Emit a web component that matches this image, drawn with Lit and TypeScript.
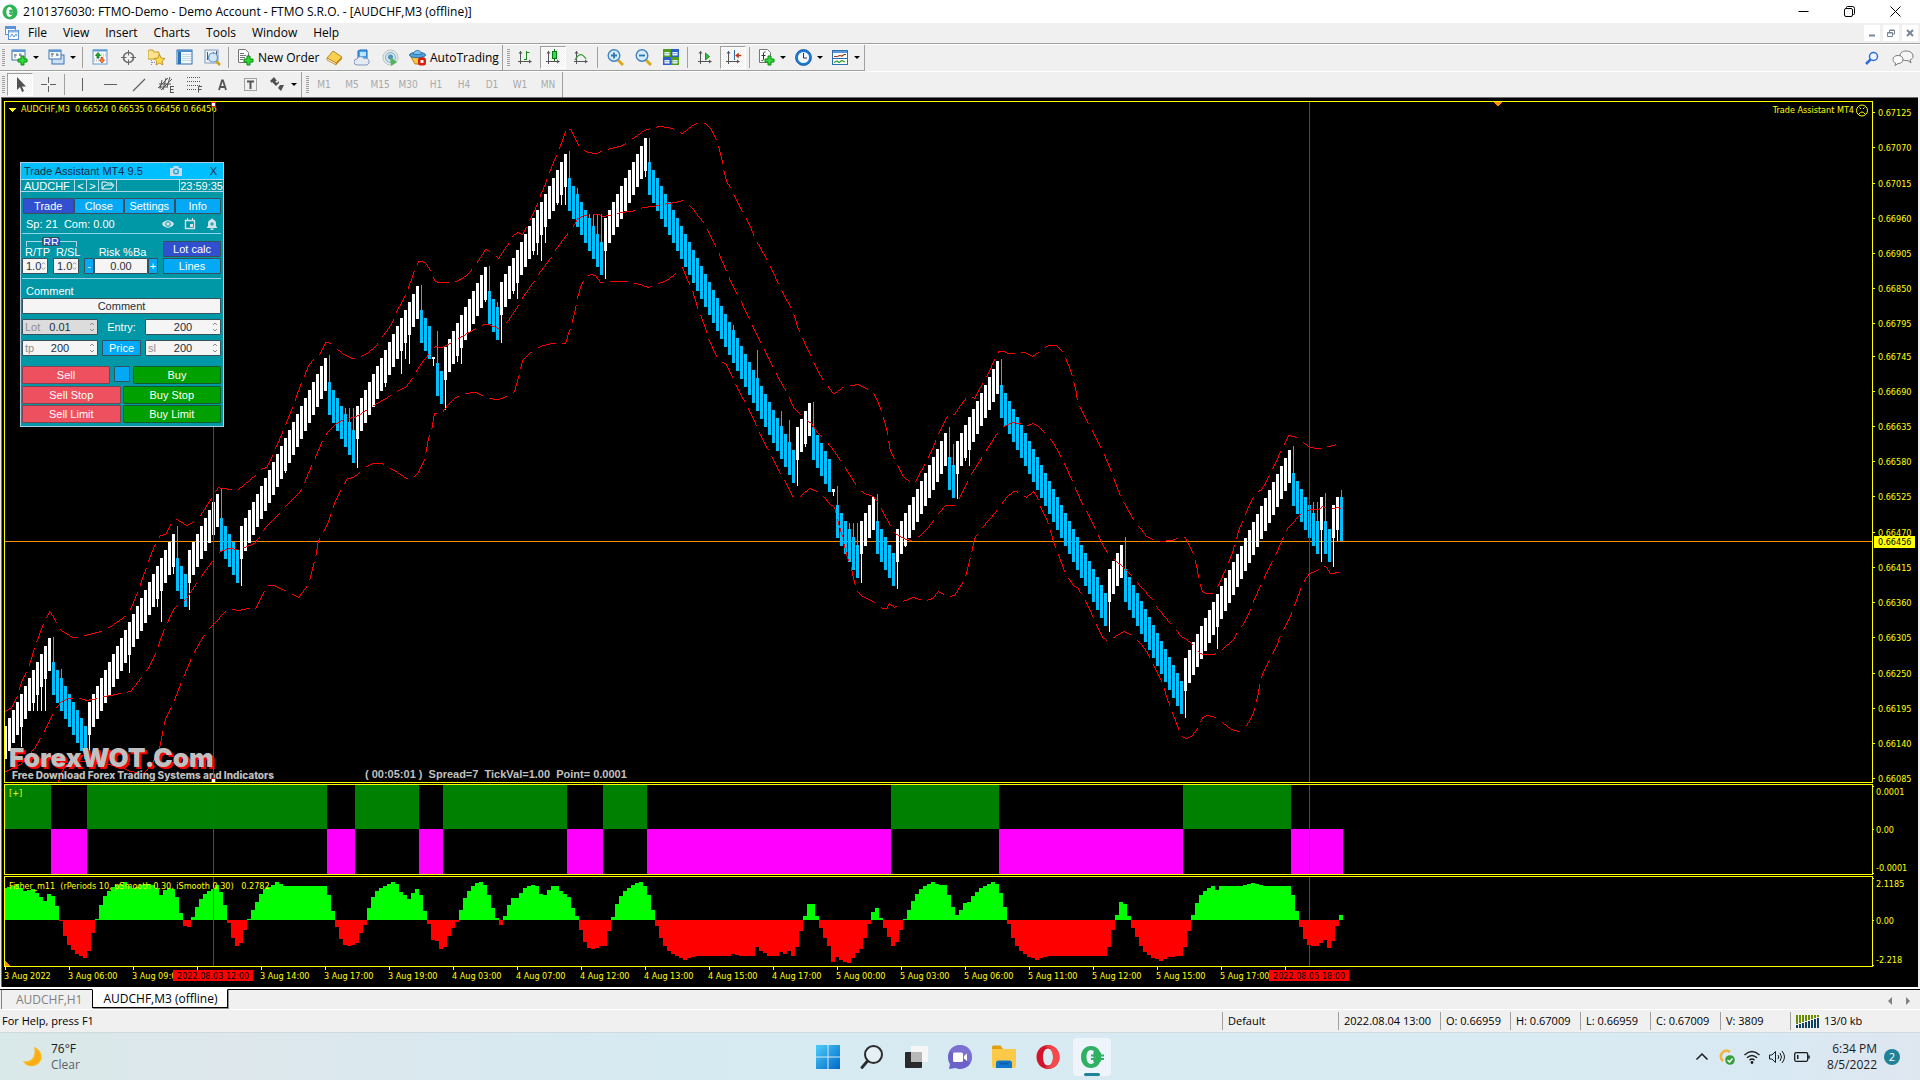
import { LitElement, html, svg, css, nothing } from "lit";
import { customElement, state } from "lit/decorators.js";
import { classMap } from "lit/directives/class-map.js";

/* ------------------------------------------------------------------ */
/* Chart data                                                          */
/* ------------------------------------------------------------------ */

type Run = {
  x: number;
  n: number;
  top: number;
  up: boolean;
  wicks?: [number, number][];
  h?: number;
};

/* Each run is a series of bricks 4px apart, stepping 8px per brick. */
const RUNS: Run[] = [
  { x: 4, n: 12, top: 726, up: true, wicks: [[20, 747], [32, 711], [36, 711], [40, 711], [44, 711]] },
  { x: 52, n: 9, top: 662, up: false, wicks: [[52, 637], [60, 669]] },
  { x: 88, n: 22, top: 702, up: true, wicks: [[88, 753], [128, 673], [156, 607], [160, 622], [172, 574]] },
  { x: 176, n: 3, top: 558, up: false, wicks: [[176, 526]] },
  { x: 188, n: 8, top: 550, up: true, wicks: [[188, 610]] },
  { x: 220, n: 5, top: 518, up: false, wicks: [[220, 489]] },
  { x: 240, n: 22, top: 526, up: true, wicks: [[240, 586], [284, 473]] },
  { x: 328, n: 7, top: 382, up: false, wicks: [[328, 355], [344, 408], [348, 408], [352, 408]] },
  { x: 356, n: 16, top: 406, up: true, wicks: [[356, 468], [384, 387], [400, 374], [404, 359], [408, 364]] },
  { x: 420, n: 3, top: 310, up: false, wicks: [[420, 285]] },
  { x: 432, n: 1, top: 357, up: true, h: 2, wicks: [[432, 366]] },
  { x: 436, n: 2, top: 363, up: false, wicks: [[436, 331]] },
  { x: 444, n: 11, top: 347, up: true, wicks: [[444, 410], [456, 362], [460, 364], [484, 302]] },
  { x: 488, n: 3, top: 291, up: false, wicks: [[488, 266], [496, 302]] },
  { x: 500, n: 17, top: 282, up: true, wicks: [[500, 343], [512, 294], [516, 299], [532, 255], [536, 255], [540, 261], [544, 243], [556, 205], [560, 205], [564, 205]] },
  { x: 568, n: 9, top: 178, up: false, wicks: [[568, 151], [576, 188], [588, 214], [592, 214], [596, 214], [600, 214]] },
  { x: 604, n: 11, top: 218, up: true, wicks: [[604, 279], [644, 177]] },
  { x: 648, n: 37, top: 162, up: false, wicks: [[648, 138], [732, 325], [756, 350], [780, 411], [788, 420]] },
  { x: 796, n: 4, top: 427, up: true, wicks: [[796, 486], [804, 447]] },
  { x: 812, n: 5, top: 427, up: false, wicks: [[812, 402]] },
  { x: 832, n: 1, top: 489, up: true, h: 3, wicks: [[832, 496]] },
  { x: 836, n: 6, top: 505, up: false, wicks: [[836, 486], [848, 523], [852, 523], [856, 523]] },
  { x: 860, n: 4, top: 521, up: true, wicks: [[860, 583]] },
  { x: 876, n: 5, top: 521, up: false, wicks: [[876, 494]] },
  { x: 896, n: 13, top: 529, up: true, wicks: [[896, 589], [904, 547]] },
  { x: 948, n: 2, top: 457, up: false, wicks: [[948, 427], [952, 444]] },
  { x: 956, n: 11, top: 441, up: true, wicks: [[956, 499], [964, 461], [968, 466]] },
  { x: 1000, n: 27, top: 385, up: false, wicks: [[1000, 359]] },
  { x: 1108, n: 4, top: 569, up: true, wicks: [[1108, 632]] },
  { x: 1124, n: 15, top: 569, up: false, wicks: [[1124, 537]] },
  { x: 1184, n: 27, top: 658, up: true, wicks: [[1184, 718], [1216, 649]] },
  { x: 1292, n: 7, top: 473, up: false, wicks: [[1292, 446], [1312, 502], [1316, 502]] },
  { x: 1320, n: 1, top: 497, up: true, wicks: [[1320, 562]] },
  { x: 1324, n: 2, top: 521, up: false, wicks: [[1324, 493]] },
  { x: 1332, n: 2, top: 505, up: true, wicks: [[1332, 567], [1336, 541]] },
  { x: 1340, n: 1, top: 497, up: false, h: 44, wicks: [[1340, 490]] },
];

const UPPER = [5,711,11,707,17,695,21,682,28,667,35,645,43,623,49,611,53,616,56,623,61,630,72,637,79,637,88,634,100,631,109,627,126,615,131,607,137,592,146,567,149,558,155,543,160,535,165,534,171,523,175,518,186,525,192,522,200,515,211,498,218,487,222,488,231,489,238,489,255,475,260,469,266,467,272,455,275,448,282,432,292,407,300,385,304,376,308,365,313,359,318,356,325,342,328,342,335,347,342,353,352,358,359,357,368,352,376,345,381,338,392,322,395,313,404,297,407,290,413,273,418,261,422,261,425,263,428,267,431,273,434,280,437,282,443,282,453,282,462,278,468,273,474,266,480,257,485,249,492,252,498,258,504,249,509,242,513,235,517,232,522,234,527,224,535,208,538,200,545,183,547,177,553,162,557,153,563,137,566,127,570,129,576,141,579,147,587,152,596,153,603,150,610,148,619,146,627,142,644,130,650,128,659,126,668,127,674,129,682,133,692,125,698,122,705,123,710,128,713,133,717,142,721,157,723,168,726,181,731,189,739,206,743,213,751,229,754,237,763,253,767,261,775,277,778,284,787,301,791,309,794,316,797,326,800,333,807,349,811,357,817,370,823,380,833,393,837,391,844,386,858,384,862,386,868,389,873,392,878,403,881,411,886,428,890,451,894,458,901,473,903,476,909,481,914,483,921,470,925,462,933,446,936,438,943,423,947,415,954,414,960,405,966,397,969,395,974,398,978,390,983,382,991,366,998,351,1003,351,1008,353,1014,353,1025,352,1032,356,1038,352,1048,345,1056,345,1062,351,1069,367,1072,376,1076,393,1077,402,1084,416,1088,423,1097,441,1101,448,1108,464,1111,472,1117,488,1120,496,1129,512,1133,519,1140,528,1146,536,1153,539,1160,541,1171,540,1177,538,1182,536,1185,537,1189,546,1193,553,1197,570,1198,578,1202,591,1205,593,1212,593,1217,586,1222,576,1225,569,1232,552,1234,544,1239,528,1242,521,1249,504,1253,497,1257,491,1261,489,1265,483,1268,476,1277,459,1279,453,1288,435,1294,436,1302,441,1309,447,1318,448,1323,448,1328,446,1336,444];

const MIDDLE = [5,771,10,769,21,763,34,748,40,738,44,731,50,718,56,707,61,701,67,698,80,698,86,700,97,698,104,696,120,693,130,691,141,677,147,669,155,653,158,645,164,628,168,620,173,609,178,604,186,598,196,583,203,573,214,558,220,551,229,548,238,549,244,547,254,543,260,535,265,527,280,512,287,504,298,493,302,488,305,480,312,463,315,457,322,440,327,432,335,424,343,419,353,417,358,415,367,409,375,404,392,394,398,390,406,386,413,376,417,369,423,360,430,352,435,346,441,347,453,341,460,337,477,327,484,324,488,324,498,328,501,327,508,320,514,311,519,303,523,296,535,279,540,271,552,255,556,248,568,232,574,224,577,218,583,215,590,214,598,214,603,216,613,214,620,212,636,210,643,207,660,205,667,203,675,202,682,200,685,201,692,208,699,217,705,225,708,232,717,249,720,257,727,273,730,281,739,298,742,304,750,321,753,328,762,345,765,352,774,370,777,376,787,393,790,400,793,407,803,417,811,423,817,432,825,440,830,446,834,451,842,463,847,471,858,488,864,493,873,496,878,503,882,511,891,527,895,533,905,539,913,540,920,535,927,528,934,519,938,513,945,505,954,505,960,496,968,479,972,472,982,456,987,448,996,434,1003,426,1012,422,1020,423,1027,425,1033,423,1037,425,1045,433,1051,440,1056,448,1061,457,1064,463,1072,481,1075,488,1082,504,1087,512,1095,529,1098,536,1103,546,1107,552,1115,560,1123,567,1130,574,1140,586,1151,598,1155,605,1169,622,1175,629,1181,636,1185,638,1192,644,1198,651,1202,654,1213,654,1216,653,1222,649,1233,639,1237,632,1242,625,1251,608,1253,601,1260,585,1264,577,1272,560,1276,553,1283,536,1288,527,1302,512,1310,509,1318,509,1322,506,1327,508,1333,508,1338,507,1341,508];

const LOWER = [58,781,62,770,67,762,82,761,108,764,122,767,130,771,143,773,152,763,159,748,162,733,165,718,170,708,173,702,180,684,183,677,190,660,193,653,203,636,208,629,214,623,224,612,230,608,238,610,248,608,255,609,263,592,267,585,274,585,282,589,289,592,298,597,305,588,309,580,313,564,315,557,318,540,322,533,328,521,331,511,334,503,339,492,343,485,347,478,353,477,358,473,365,467,372,463,382,463,388,467,397,472,406,478,413,477,417,473,423,462,425,454,428,438,431,430,434,413,441,413,448,404,455,397,463,393,475,392,480,394,487,398,498,399,504,397,511,393,514,391,518,377,520,369,522,360,529,353,536,348,543,345,552,343,565,343,568,333,571,325,575,308,577,297,581,284,585,277,590,274,595,275,600,282,607,281,625,281,632,282,640,284,648,287,656,284,666,280,673,275,682,267,688,282,692,290,697,307,700,314,706,331,708,338,715,354,720,361,725,363,732,376,734,382,743,399,747,407,755,423,758,431,767,448,771,455,779,472,783,478,792,496,797,498,803,493,809,488,814,490,821,493,828,502,834,507,837,519,841,533,843,541,847,558,850,564,854,582,857,591,862,596,871,600,877,604,882,608,886,608,889,603,894,607,902,601,913,597,919,599,926,600,932,598,938,591,942,593,948,596,954,595,961,584,965,576,969,560,971,553,974,538,981,528,995,512,1000,505,1006,497,1013,491,1016,491,1022,494,1026,497,1033,491,1037,497,1039,504,1047,521,1049,528,1054,544,1057,552,1063,568,1066,575,1073,585,1077,587,1083,597,1091,613,1094,621,1102,637,1108,641,1115,636,1123,631,1132,635,1140,643,1146,651,1150,659,1158,675,1162,683,1167,699,1170,707,1176,723,1179,731,1182,736,1186,738,1192,735,1197,728,1202,717,1207,715,1213,716,1222,722,1231,729,1238,731,1242,729,1246,725,1251,717,1254,709,1258,692,1259,685,1262,673,1265,668,1268,661,1277,644,1279,637,1288,620,1291,613,1297,597,1300,589,1304,580,1309,573,1317,570,1322,564,1326,567,1330,573,1338,572,1341,573];

/* Trend histogram: [from, to, rising] */
const TREND: [number, number, boolean][] = [
  [5, 51, true], [51, 87, false], [87, 327, true], [327, 355, false], [355, 419, true],
  [419, 443, false], [443, 567, true], [567, 603, false], [603, 647, true], [647, 891, false],
  [891, 999, true], [999, 1183, false], [1183, 1291, true], [1291, 1343, false],
];

const rep = (v: number, n: number): number[] => Array.from({ length: n }, () => v);

/* Fisher histogram heights, one value per 4px bar */
const FISHER: number[] = [
  32, 33, 34, 36, 32, 29, 30, 31, 27, 23, 19, 26, 24, 14, -1, -16, -25, -30, -34, -36, -38, -31, -13, 1, 15, 24, 29, 33, 35, 36, 38, 34, 32,
  33, 35, 36, 36, 35, 32, 25, 30, 32, 31, 23, 7, -6, -7, 3, 13, 21, 26, 29, 31, 35, 28, 15, -3, -18, -26, -23, -10, 1, 10, 18, 26, 31,
  33, 35, 38, 36, ...rep(34, 11), 25, 9, -7, -19, -25, -26, -25, -23, -13, -5, 12, 23, 29, 32, 34, 36, 38, 36, 28, 25, 21, 27, 31, 25, 9,
  -4, -20, -21, -29, -27, -16, -8, -2, 10, 22, 29, 34, 37, 38, 35, 25, 12, 2, -5, 4, 15, 22, 22, 27, 32, 34, 35, 34, 26, 25, 30, 34, 34,
  29, 26, 23, 12, 4, -10, -22, -28, -29, -28, -26, -26, -11, 3, 16, 24, 29, 32, 35, 37, 38, 34, 25, 10, -6, -18, -26, -31, -34, -36, -38,
  -40, -38, -37, ...rep(-36, 9), -34, -35, ...rep(-36, 4), -27, -31, -33, -36, -36, -36, -32, -34, -31, -36, -27, -11, 4, 16, 16, 4, -8,
  -18, -26, -42, -37, -40, -42, -43, -38, -33, -29, -18, -4, 8, 12, 2, -8, -17, -26, -22, -10, 1, 10, 19, 26, 31, 34, 36, 38, 36, 35, 35,
  25, 13, 5, 10, 17, 18, 24, 28, 32, 34, 36, 38, 36, 27, 13, -4, -18, -26, -31, -34, -37, -38, -40, -38, -37, ...rep(-36, 15), -27, -10, 5,
  18, 16, 4, -8, -17, -26, -32, -35, -38, -39, -41, -39, -37, -37, -36, -36, -27, -11, 5, 17, 25, 29, 32, 34, 30, ...rep(34, 6), 35, 36, 37,
  36, 35, ...rep(34, 7), 25, 9, -7, -19, -25, -26, -26, -23, -20, -28, -21, -6, 5,
];

const PRICES: [string, number][] = [
  ["0.67125", 112], ["0.67070", 147], ["0.67015", 183], ["0.66960", 218], ["0.66905", 253], ["0.66850", 288],
  ["0.66795", 323], ["0.66745", 356], ["0.66690", 391], ["0.66635", 426], ["0.66580", 461], ["0.66525", 496],
  ["0.66470", 532], ["0.66415", 567], ["0.66360", 602], ["0.66305", 637], ["0.66250", 673], ["0.66195", 708],
  ["0.66140", 743], ["0.66085", 778],
];

const TIMES = [
  "3 Aug 2022", "3 Aug 06:00", "3 Aug 09:00", "", "3 Aug 14:00", "3 Aug 17:00", "3 Aug 19:00", "4 Aug 03:00",
  "4 Aug 07:00", "4 Aug 12:00", "4 Aug 13:00", "4 Aug 15:00", "4 Aug 17:00", "5 Aug 00:00", "5 Aug 03:00",
  "5 Aug 06:00", "5 Aug 11:00", "5 Aug 12:00", "5 Aug 15:00", "5 Aug 17:00", "",
];

function candlePaths() {
  const out = { up: "", down: "" };
  for (const run of RUNS) {
    const h = run.h ?? 33;
    let d = "";
    for (let i = 0; i < run.n; i++) {
      const y = run.top + (run.up ? -8 : 8) * i;
      d += `M${run.x + i * 4} ${y}h3v${h}h-3z`;
    }
    for (const [wx, wy] of run.wicks ?? []) {
      const y = run.top + ((run.up ? -8 : 8) * (wx - run.x)) / 4;
      d += `M${wx + 1} ${y}h1V${wy}h-1z`;
    }
    out[run.up ? "up" : "down"] += d;
  }
  return out;
}

/* Walks a polyline pixel by pixel and keeps 18 of every 24 steps. */
function dashedPath(pts: number[], phase = 0) {
  let d = "";
  let count = phase;
  for (let i = 0; i + 3 < pts.length; i += 2) {
    const [x0, y0, x1, y1] = pts.slice(i, i + 4);
    const steps = Math.max(Math.abs(x1 - x0), Math.abs(y1 - y0));
    for (let s = 0; s < steps; s++) {
      if (count++ % 24 < 18) {
        const x = Math.round(x0 + ((x1 - x0) * s) / steps);
        const y = Math.round(y0 + ((y1 - y0) * s) / steps);
        d += `M${x} ${y}h1v1h-1z`;
      }
    }
  }
  return d;
}

function fisherPaths() {
  let up = "";
  let down = "";
  FISHER.forEach((v, i) => {
    const x = (i + 1) * 4 - 1;
    if (v > 0) up += `M${x} ${920 - v}h4V920h-4z`;
    else down += `M${x} 920h4v${-v}h-4z`;
  });
  return { up, down };
}

const CANDLES = candlePaths();
const BANDS = dashedPath(UPPER) + dashedPath(MIDDLE) + dashedPath(LOWER);
const FISH = fisherPaths();

/* ------------------------------------------------------------------ */
/* Icons                                                               */
/* ------------------------------------------------------------------ */

const axes = svg`<path d="M3.500 2v13M1 12.500h13.500" stroke="#555" fill="none"/><path d="M1.500 4.500l2-2.500 2 2.500zM12 10.500l2.500 2-2.500 2z" fill="#555"/>`;
const plus = svg`<path d="M10 7h3v3h3v3h-3v3h-3v-3H7v-3h3z" fill="#2fdc35" stroke="#0a8a12"/>`;

const ICONS: Record<string, unknown> = {
  newChart: svg`<rect x="1" y="1" width="13" height="10" fill="#fff" stroke="#3a74b4"/><path d="M1 2h13" stroke="#5a9ad8" stroke-width="2"/><path d="M4 5v4M3 6h3M9 4v3M8 6h3" stroke="#678" fill="none"/>${plus}`,
  profiles: svg`<rect x="4" y="6" width="12" height="9" fill="#cfe2f4" stroke="#3a74b4"/><rect x="1" y="1" width="12" height="9" fill="#f5faff" stroke="#3a74b4"/><path d="M1 2h12" stroke="#5a9ad8" stroke-width="2"/><path d="M4 4v4M3 5h3M9 4v3M8 6h3" stroke="#678" fill="none"/>`,
  market: svg`<rect x="1" y="1" width="14" height="14" fill="#fff" stroke="#5c9ad0"/><path d="M1 1.500h14" stroke="#5c9ad0" stroke-width="2"/><path d="M9 5h5M9 7h5M2 10h5M2 12h5" stroke="#aab" stroke-dasharray="1 1"/><path d="M6 3.500l2.500 3H7V9H5V6.500H3.500z" fill="#18b020" stroke="#0a7a10" stroke-width=".8"/><path d="M10 14l-2.500-3H9V8.500h2V11h1.500z" fill="#ff8a40" stroke="#c03a08" stroke-width=".8"/>`,
  dataWindow: svg`<circle cx="8.500" cy="8.500" r="5" fill="none" stroke="#6a6a6a" stroke-width="1.600"/><path d="M8.500 1v5.500M8.500 10.500V16M1 8.500h5.500M10.500 8.500H16" stroke="#6a6a6a"/>`,
  navigator: svg`<path d="M0 3l1-2h4l1 2h5v7H0z" fill="#fbe391" stroke="#c89b1c"/><path d="M3.500 11v5M4 13.500h4" stroke="#8894a0" stroke-dasharray="1 1"/><path d="M11.500 5.500l1.700 3.500 3.800.5-2.800 2.600.7 3.900-3.400-1.900L8 16l.8-3.900L6 9.500l3.900-.5z" fill="#ffdb4a" stroke="#b5831a" stroke-width=".8"/>`,
  terminal: svg`<rect x="1" y="1" width="15" height="14" fill="#f4faff" stroke="#2d6fb0"/><path d="M1 2h15" stroke="#4a90d2" stroke-width="2"/><path d="M2 3h3v12H2z" fill="#2a70b8"/><path d="M6 5.500h9M6 7.500h9M6 9.500h9M6 11.500h9" stroke="#c4d6e6"/>`,
  tester: svg`<rect x="1" y="1" width="13" height="13" fill="#eef4fb" stroke="#7b9cc0"/><path d="M3.500 3v8M5.500 5v6M9.500 3v3M12.500 2v5" stroke="#556"/><path d="M12 12l4 4" stroke="#d6a01e" stroke-width="2.500"/><circle cx="9" cy="8.500" r="4.500" fill="#cfe6fa" fill-opacity=".9" stroke="#5f93c6" stroke-width="1.200"/>`,
  newOrder: svg`<path d="M1.500.5h7l3 3v10h-10z" fill="#fdfdfd" stroke="#777"/><path d="M3 4.500h4M3 6.500h6M3 8.500h5M3 10.500h3" stroke="#777"/>${plus}`,
  metaEditor: svg`<path d="M1 9l6-7 9 6v2l-6 6-9-5z" fill="#c98a14"/><path d="M1 9l6-7 9 6-6 6z" fill="#f8cf52" stroke="#a97010" stroke-width=".7"/><path d="M1 9l9 5v2l-9-5z" fill="#fff2c0" stroke="#a97010" stroke-width=".6"/>`,
  market2: svg`<path d="M4 2l2-1h7v9H4z" fill="#3fa7f0" stroke="#1d62ae"/><path d="M6 3h6v4H6z" fill="#bfe4ff"/><path d="M3 16a3 3 0 010-6 4 4 0 017-.6A3.300 3.300 0 0113 16z" fill="#e4ebf7" stroke="#8598bb"/>`,
  signals: svg`<circle cx="8.500" cy="8.500" r="7.500" fill="#e6ecea" stroke="#b4c4c0"/><circle cx="8.500" cy="8.500" r="5" fill="#d3e6ec" stroke="#74aad0"/><circle cx="8.500" cy="8" r="2.500" fill="#4f8fc0"/><path d="M8 8l1 9 6-4z" fill="#52b35d"/>`,
  autoTrading: svg`<path d="M2 8h13l-4 7H6z" fill="#f4c845" stroke="#b98712"/><ellipse cx="8.500" cy="6" rx="8" ry="2.700" fill="#4fa6de" stroke="#2a6ca2"/><path d="M4.500 5.500c0-5.500 8-5.500 8 0z" fill="#79c2ee" stroke="#2a6ca2" stroke-width=".8"/><rect x="9" y="8.500" width="8" height="8" rx="2.500" fill="#d8200c"/><rect x="11.500" y="11" width="3" height="3" fill="#fff"/>`,
  barChart: svg`${axes}<path d="M9.500 2v9M7 10.500h2M10 3.500h2.500" stroke="#1c8a20" fill="none"/>`,
  candleChart: svg`${axes}<path d="M9.500 0v12" stroke="#0a7a10"/><rect x="7.500" y="2.500" width="4" height="7" fill="#2fdc55" stroke="#0a7a10"/>`,
  lineChart: svg`${axes}<path d="M2 11c4-7 7-7 11-1" stroke="#3a9a3a" fill="none" stroke-width="1.200"/>`,
  zoomIn: svg`<path d="M11 11l5 5" stroke="#d8a81e" stroke-width="3"/><circle cx="7" cy="6.500" r="5.800" fill="#d6ecfb" stroke="#3f83c0" stroke-width="1.400"/><path d="M7 3.500v6M4 6.500h6" stroke="#2f77b4" stroke-width="1.800"/>`,
  zoomOut: svg`<path d="M11 11l5 5" stroke="#d8a81e" stroke-width="3"/><circle cx="7" cy="6.500" r="5.800" fill="#d6ecfb" stroke="#3f83c0" stroke-width="1.400"/><path d="M4 6.500h6" stroke="#2f77b4" stroke-width="1.800"/>`,
  tile: svg`<path d="M0 0h8v8H0zM8 8h8v8H8z" fill="#4fa018"/><path d="M8 0h8v8H8zM0 8h8v8H0z" fill="#2b5fd0"/><path d="M1.500 3h5v3.500h-5zM9.500 3h5v3.500h-5zM1.500 11h5v3.500h-5zM9.500 11h5v3.500h-5z" fill="#eef4ff"/><path d="M2 4.500h4M10 4.500h4M2 12.500h4M10 12.500h4" stroke="#9bb"/>`,
  autoScroll: svg`${axes}<path d="M8.500 4l4 3.500-4 3.500z" fill="#2fc040" stroke="#0a7a10" stroke-width=".8"/>`,
  chartShift: svg`${axes}<path d="M9.500 1v10" stroke="#2f6fa8"/><path d="M10.500 6.500l3-2.500v2H16v1h-2.500v2z" fill="#c03a10" stroke="#c03a10" stroke-width=".5"/>`,
  indicators: svg`<path d="M1.500.5h8l3 3v10h-11z" fill="#fdfdfd" stroke="#777"/><path d="M7.500 3c-2-.5-2 1-2 3v4c0 1-.5 2-2 1.500M3.500 6.500h4" stroke="#333" fill="none"/>${plus}`,
  clock: svg`<circle cx="8.500" cy="8.500" r="6.800" fill="#f4f9ff" stroke="#1c7ad8" stroke-width="2.400"/><circle cx="8.500" cy="8.500" r="8" fill="none" stroke="#0d4688" stroke-width=".7"/><path d="M8.500 4v5h3.500" stroke="#334" fill="none"/>`,
  template: svg`<rect x=".5" y="1.500" width="15" height="14" fill="#fff" stroke="#2d6fb0"/><path d="M1 3h14" stroke="#5a9ad8" stroke-width="2"/><path d="M1 9.500h14" stroke="#2d6fb0"/><path d="M2 7.500h3l3-1 2 .5 2-1.500h2" stroke="#a03a10" fill="none" stroke-width="1.200"/><path d="M2 13.500l3-1.500 2 1.500 3-2 3 1.500" stroke="#2d9a30" fill="none" stroke-width="1.200"/>`,
  cursor: svg`<path d="M5 1v13l3-3 2 5 2-1-2-4.500h4z" fill="#505050"/>`,
  cross: svg`<path d="M8.500 1v6M8.500 10v6M1 8.500h6M10 8.500h6" stroke="#606060"/>`,
  vline: svg`<path d="M8.500 2v13" stroke="#606060"/>`,
  hline: svg`<path d="M2 8.500h13" stroke="#606060"/>`,
  trend: svg`<path d="M3 15L15 3" stroke="#606060" stroke-width="1.200"/>`,
  channel: svg`<path d="M0 12L10 2M3 14L14 3M1 8h12M4 4L2 13M8 2L5 14M12 1L9 11M1 11h9" stroke="#555" fill="none"/><path d="M12.500 10v6.500M12 10.500h4M12 13.500h3.500M12 16.500h4" stroke="#555" fill="none"/>`,
  fibo: svg`<path d="M1 1.500h14M1 5.500h14M1 9.500h14M1 13.500h9" stroke="#555" stroke-dasharray="1 1"/><path d="M12.500 16.500v-6H16M12.500 13.500h3" stroke="#555" fill="none"/>`,
  letter: svg`<path d="M5 14L8 4.500h1L12 14M6.500 11h4" stroke="#555" stroke-width="1.800" fill="none"/>`,
  label: svg`<rect x="2.500" y="2.500" width="12" height="12" fill="none" stroke="#555" stroke-dasharray="1 1"/><path d="M5 5.500h7M8.500 5.500V13" stroke="#555" stroke-width="2" fill="none"/>`,
  arrows: svg`<path d="M1 5l4-4 3 4H6l2 2 2-2v2l-3 3-4-4v1z" fill="#505050"/><path d="M11 9h4l-3 6-3-3z M8 11l3 3" fill="#505050"/>`,
};

const icon = (name: string) => html`<svg class="ico" viewBox="0 0 17 17" aria-hidden="true">${ICONS[name]}</svg>`;

/* ------------------------------------------------------------------ */
/* Trade panel                                                         */
/* ------------------------------------------------------------------ */

@customElement("trade-panel")
export class TradePanel extends LitElement {
  @state() private tab = "Trade";

  static styles = css`
    :host {
      display: block;
      box-sizing: border-box;
      width: 204px;
      border: 1px solid #a8cfe4;
      background: #0097a7;
      color: #fff;
      font: 11px/14px "Liberation Sans", Arial, sans-serif;
      padding-bottom: 3px;
    }
    * { box-sizing: border-box; }
    button, input { font: inherit; color: inherit; margin: 0; padding: 0; border: 0; background: none; border-radius: 0; }
    .head { display: flex; align-items: center; height: 16px; padding: 0 6px 0 3px; background: #00bfff; color: #1c2a44; }
    .head .name { flex: 1; }
    .head .cam { width: 12px; height: 10px; margin-right: 28px; }
    .sym { display: flex; height: 13px; line-height: 12px; border-top: 1px solid #b5d8e8; border-bottom: 1px solid #b5d8e8; padding-left: 3px; }
    .sym > * { border-right: 1px solid #b5d8e8; text-align: center; }
    .sym .pair { width: 51px; text-align: left; }
    .sym button { width: 12px; line-height: 10px; }
    .sym .folder { width: 18px; display: grid; place-items: center; }
    .sym .gap { flex: 1; }
    .sym .time { border-right: 0; }
    .tabs { display: flex; margin: 6px 2px 0; height: 16px; }
    .btn { display: block; height: 16px; line-height: 14px; text-align: center; border: 1px solid #37505c; border-radius: 1px; background: #03a9f4; color: #fff; }
    .tabs .btn { flex: 1 1 0; }
    .tabs .btn:nth-child(-n + 3) { flex-basis: 6px; }
    .btn.on { background: #3050cf; }
    .sp { display: flex; align-items: center; margin: 0 2px 0 1px; padding: 0 3px 0 4px; height: 20px; border-bottom: 1px solid #8fd3e8; gap: 10px; }
    .sp span { flex: 1; white-space: pre; }
    .sp svg { width: 12px; height: 12px; }
    .risk { display: grid; grid-template-columns: 26px 26px 1fr 58px; column-gap: 5px; margin: 0 2px 0 1px; height: 45px; border-bottom: 1px solid #8fd3e8; padding: 7px 0 0; grid-template-rows: 17px 16px; align-items: start; position: relative; }
    .risk label { line-height: 22px; padding-left: 3px; white-space: nowrap; }
    .risk label.mid { text-align: center; }
    .rr { position: absolute; left: 4px; top: 7px; width: 51px; height: 6px; border: 1px solid #a8d8e8; border-bottom: 0; }
    .rr b { position: absolute; left: 15px; top: -5px; width: 18px; height: 9px; font-weight: 400; line-height: 8px; text-align: center; overflow: hidden; background: #3050cf; border: 1px solid #37505c; border-radius: 2px; }
    .field { display: flex; position: relative; height: 16px; border: 1px solid #37505c; border-radius: 1px; background: #f5f5f5; color: #22303c; }
    .field input { width: 100%; min-width: 0; text-align: center; }
    .field.small input { text-align: left; padding-left: 3px; }
    .field .tag { position: absolute; left: 2px; top: 0; color: #8f8f8f; line-height: 14px; }
    .field.off { background: #dcdcdc; }
    .spin { position: absolute; right: 2px; top: 2px; width: 6px; height: 10px; }
    .small .spin { right: 1px; width: 5px; }
    .stepper { display: grid; grid-template-columns: 10px 1fr 10px; }
    .note { display: block; padding: 4px 5px 0; height: 19px; line-height: 16px; }
    .wide { margin: 0 2px 0 1px; }
    .row { display: grid; grid-template-columns: 76px 1fr 76px; column-gap: 4px; margin: 5px 2px 0 1px; }
    .row .lab { text-align: center; line-height: 16px; }
    .deal { display: grid; grid-template-columns: 88px 16px 88px; justify-content: space-between; margin: 10px 2px 0 1px; }
    .deal .btn, .pend .btn { height: 18px; line-height: 16px; }
    .deal .sq { height: 16px; }
    .pend { display: grid; grid-template-columns: 1fr 1fr; column-gap: 2px; margin: 2px 2px 0 1px; }
    .pend + .pend { margin-top: 1px; }
    .sell { background: #ee5060; border-color: #7c4450; }
    .buy { background: #00a000; border-color: #155c2c; }
  `;

  private spin() {
    return html`<svg class="spin" viewBox="0 0 6 10" aria-hidden="true"><path d="M1 3l2-2 2 2M1 7l2 2 2-2" fill="none" stroke="#8c8c8c"/></svg>`;
  }

  render() {
    return html`
      <div class="head">
        <span class="name">Trade Assistant MT4 9.5</span>
        <svg class="cam" viewBox="0 0 12 10"><path d="M0 2h3l1-2h4l1 2h3v8H0z" fill="#c9dbe8"/><circle cx="6" cy="5.500" r="2.300" fill="none" stroke="#0aa4dc" stroke-width="1.300"/></svg>
        <button aria-label="Close panel">X</button>
      </div>
      <div class="sym">
        <button class="pair">AUDCHF</button>
        <button>&lt;</button>
        <button>&gt;</button>
        <button class="folder" aria-label="Open"><svg width="14" height="9" viewBox="0 0 14 9"><path d="M1 8V1h4l1 1h5v2M1 8l3-4h9l-3 4z" fill="none" stroke="#fff"/></svg></button>
        <span class="gap"></span>
        <span class="time">23:59:35</span>
      </div>
      <div class="tabs">
        ${["Trade", "Close", "Settings", "Info"].map(
          (t) => html`<button class=${classMap({ btn: true, on: this.tab === t })} @click=${() => (this.tab = t)}>${t}</button>`,
        )}
      </div>
      <div class="sp">
        <span>Sp: 21  Com: 0.00</span>
        <svg viewBox="0 0 12 12"><path d="M0 6c3-5 9-5 12 0-3 5-9 5-12 0z" fill="#d5e4e8"/><circle cx="6" cy="6" r="2.300" fill="#d5e4e8" stroke="#0097a7"/></svg>
        <svg viewBox="0 0 12 12"><path d="M1.500 2.500h9v8h-9zM1 2.500h10" fill="none" stroke="#d5e4e8" stroke-width="1.400"/><path d="M6 6h3v3H6zM3 0h1v3H3zM8 0h1v3H8z" fill="#d5e4e8"/></svg>
        <svg viewBox="0 0 12 12"><path d="M6 0l1 1.500c2 .5 3 2 3 4V8l1.500 2H.5L2 8V5.500c0-2 1-3.500 3-4zM4.500 10.500h3V12h-3z" fill="#d5e4e8"/><path d="M6 4v4M4 6h4" stroke="#0097a7"/></svg>
      </div>
      <div class="risk">
        <div class="rr"><b>RR</b></div>
        <label for="rtp">R/TP</label>
        <label for="rsl">R/SL</label>
        <label class="mid" for="risk">Risk %Ba</label>
        <button class="btn on">Lot calc</button>
        <div class="field small"><input id="rtp" value="1.0" />${this.spin()}</div>
        <div class="field small"><input id="rsl" value="1.0" />${this.spin()}</div>
        <div class="stepper">
          <button class="btn">-</button>
          <div class="field"><input id="risk" value="0.00" /></div>
          <button class="btn">+</button>
        </div>
        <button class="btn">Lines</button>
      </div>
      <label class="note" for="comment">Comment</label>
      <div class="field wide"><input id="comment" value="Comment" /></div>
      <div class="row">
        <div class="field off"><label class="tag" for="lot">Lot</label><input id="lot" value="0.01" />${this.spin()}</div>
        <label class="lab" for="entry">Entry:</label>
        <div class="field"><input id="entry" value="200" />${this.spin()}</div>
      </div>
      <div class="row">
        <div class="field"><label class="tag" for="tp">tp</label><input id="tp" value="200" />${this.spin()}</div>
        <button class="btn">Price</button>
        <div class="field"><label class="tag" for="sl">sl</label><input id="sl" value="200" />${this.spin()}</div>
      </div>
      <div class="deal">
        <button class="btn sell">Sell</button>
        <button class="btn sq" aria-label="Mode"></button>
        <button class="btn buy">Buy</button>
      </div>
      <div class="pend">
        <button class="btn sell">Sell Stop</button>
        <button class="btn buy">Buy Stop</button>
      </div>
      <div class="pend">
        <button class="btn sell">Sell Limit</button>
        <button class="btn buy">Buy Limit</button>
      </div>
    `;
  }
}

/* ------------------------------------------------------------------ */
/* Chart                                                               */
/* ------------------------------------------------------------------ */

@customElement("chart-view")
export class ChartView extends LitElement {
  static styles = css`
    :host {
      display: grid;
      grid-template-columns: 1fr 45px;
      grid-template-rows: 1fr 91px 91px 19px;
      row-gap: 1px;
      box-sizing: border-box;
      padding: 3px 0 0 2px;
      border-top: 1px solid #6d6d6d;
      border-left: 1px solid #6d6d6d;
      background: #000;
      color: #ff0;
      font: 9px/12px "DejaVu Sans Condensed", "Noto Sans", sans-serif;
    }
    .pane { position: relative; border: 1px solid #ff0; overflow: hidden; min-width: 0; }
    .pane svg, .axis svg { display: block; width: 100%; height: 100%; }
    .axis { position: relative; min-width: 0; }
    svg { overflow: visible; shape-rendering: crispEdges; }
    .smooth { shape-rendering: auto; }
    text { fill: #ff0; dominant-baseline: central; white-space: pre; }
    .dark { fill: #000; }
    .brand { font: 900 26px Inter, "Liberation Sans", sans-serif; fill: #c0c0c0; }
    .shadow { fill: #f00; }
    .sub { font: 800 10px Inter, "Liberation Sans", sans-serif; fill: #c0c0c0; }
    .info { font: 700 11px "Liberation Sans", Arial, sans-serif; fill: #c0c0c0; }
    .time { grid-column: 1 / -1; margin-top: -1px; }
    .time svg { display: block; width: 100%; height: 20px; }
    trade-panel { position: absolute; left: 15px; top: 60px; }
  `;

  render() {
    return html`
      <div class="pane">
        <svg>
          <g transform="translate(-5 -102)">
            <path d="M5 541h1867v1H5z" fill="#ff8c00" />
            <path d=${CANDLES.up} fill="#fff" />
            <path d=${CANDLES.down} fill="#00bfff" />
            <path d=${BANDS} fill="#f00" />
            <path d="M1493 102h9l-4 5z" fill="#ff8c00" />
            <path d="M8 108h8l-4 4z" fill="#ff0" />
            <text x="21" y="109">AUDCHF,M3  0.66524 0.66535 0.66456 0.66456</text>
            <text x="1854" y="110" text-anchor="end">Trade Assistant MT4</text>
            <g class="smooth" fill="none" stroke="#ff0">
              <circle cx="1862" cy="110.500" r="5.500" />
              <path d="M1859 114q3-4 6 0M1859.500 107.500l1.500 1.500M1864.500 107.500l-1.500 1.500" />
            </g>
            <text class="brand shadow" x="11" y="759">ForexWOT.Com</text>
            <text class="brand" x="9" y="757">ForexWOT.Com</text>
            <text class="sub" x="12" y="775">Free Download Forex Trading Systems and Indicators</text>
            <text class="info" x="365" y="774">( 00:05:01 )  Spread=7  TickVal=1.00  Point= 0.0001</text>
            <path d="M213 102h1v680h-1zM1309 102h1v680h-1z" fill="#f00" />
            <path d="M211.500 102.500h4v4h-4zM211.500 778.500h4v4h-4z" fill="#fff" stroke="#f00" />
          </g>
        </svg>
        <trade-panel></trade-panel>
      </div>
      <div class="axis">
        <svg>
          <g transform="translate(-1873 -101)">
            ${PRICES.map(([t, y]) => svg`<path d=${`M1873 ${y}h2v1h-2z`} fill="#ff0"/><text x="1878" y=${y + 1}>${t}</text>`)}
            <path d="M1874 536h41v12h-41z" fill="#ff0" />
            <text class="dark" x="1878" y="542">0.66456</text>
          </g>
        </svg>
      </div>
      <div class="pane">
        <svg>
          <g transform="translate(-5 -785)">
            ${TREND.map(([a, b, up]) => svg`<path d=${up ? `M${a} 785H${b}V829H${a}z` : `M${a} 829H${b}V874H${a}z`} fill=${up ? "#008000" : "#f0f"}/>`)}
            <path d="M213 785h1v89h-1zM1309 785h1v89h-1z" fill="#f00" />
            <text x="9" y="793">[+]</text>
          </g>
        </svg>
      </div>
      <div class="axis">
        <svg>
          <g transform="translate(-1873 -784)">
            <path d="M1873 786h1v1h-1zM1873 829h1v1h-1zM1873 873h1v1h-1z" fill="#ff0" />
            <text x="1876" y="792">0.0001</text>
            <text x="1876" y="830">0.00</text>
            <text x="1876" y="868">-0.0001</text>
          </g>
        </svg>
      </div>
      <div class="pane">
        <svg>
          <g transform="translate(-5 -877)">
            <path d=${FISH.up} fill="#0f0" />
            <path d=${FISH.down} fill="#f00" />
            <path d="M213 877h1v89h-1zM1309 877h1v89h-1z" fill="#f00" />
            <path d="M5 961l5 5H5z" fill="#ff8c00" />
            <text x="9" y="886">Fisher_m11  (rPeriods 10, pSmooth 0.30, iSmooth 0.30)   0.2782</text>
          </g>
        </svg>
      </div>
      <div class="axis">
        <svg>
          <g transform="translate(-1873 -876)">
            <path d="M1873 878h1v1h-1zM1873 920h1v1h-1zM1873 965h1v1h-1z" fill="#ff0" />
            <text x="1876" y="884">2.1185</text>
            <text x="1876" y="921">0.00</text>
            <text x="1876" y="960">-2.218</text>
          </g>
        </svg>
      </div>
      <div class="time">
        <svg>
          <g transform="translate(-4 -967)">
            ${TIMES.map((t, i) => svg`<path d=${`M${5 + 64 * i} 967h1v3h-1z`} fill="#ff0"/>${t ? svg`<text x=${4 + 64 * i} y="976">${t}</text>` : nothing}`)}
            <path d="M173 970h80v11h-80zM1269 970h80v11h-80z" fill="#f00" />
            <text class="dark" x="177" y="976">2022.08.03 12:00</text>
            <text class="dark" x="1273" y="976">2022.08.05 18:00</text>
          </g>
        </svg>
      </div>
    `;
  }
}

/* ------------------------------------------------------------------ */
/* Application                                                         */
/* ------------------------------------------------------------------ */

@customElement("app-root")
export class AppRoot extends LitElement {
  @state() private frame = "M3";

  static styles = css`
    :host {
      display: flex;
      flex-direction: column;
      min-height: 100vh;
      background: #f0f0f0;
      color: #000;
      font: 12px/16px "Open Sans", "Noto Sans", sans-serif;
    }
    * { box-sizing: border-box; }
    button { font: inherit; color: inherit; margin: 0; padding: 0; border: 0; background: none; }
    .title { display: flex; align-items: center; height: 23px; padding: 0 2px; background: #fff; }
    .title .logo { width: 16px; height: 16px; margin-right: 5px; }
    .title h1 { flex: 1; margin: 0; font: inherit; }
    .win { width: 46px; height: 20px; display: grid; place-items: center; }
    .win svg { width: 11px; height: 11px; fill: none; stroke: #000; }
    .menu { display: flex; align-items: center; height: 21px; padding: 0 2px 0 4px; border-bottom: 1px solid #a0a0a0; }
    .menu .doc { width: 16px; height: 16px; }
    .menu button { padding: 0 8px; }
    .menu .fill { flex: 1; }
    .menu .mdi { width: 16px; height: 16px; padding: 0; margin-left: 3px; background: #fff; display: grid; place-items: center; }
    .mdi svg { width: 8px; height: 8px; fill: none; stroke: #74859a; }
    .tool { display: flex; height: 27px; border-top: 1px solid #fff; }
    .tool + .tool { height: 26px; }
    .bar { display: flex; align-items: center; border-right: 1px solid #a0a0a0; border-bottom: 1px solid #a0a0a0; padding-left: 6px; background: repeating-linear-gradient(#a0a0a0 0 1px, transparent 1px 2px) 2px 4px / 3px 18px no-repeat; }
    .bar + .bar { padding-left: 8px; background-position: 4px 4px; }
    .bar.low { border-bottom: 0; }
    .tb { width: 28px; height: 23px; display: flex; align-items: center; justify-content: center; }
    .tb.drop { width: 37px; justify-content: flex-start; padding-left: 5px; gap: 5px; }
    .tb.drop::after { content: ""; border: 3px solid transparent; border-top-color: #000; border-bottom: 0; }
    .tb.text { width: 88px; justify-content: flex-start; padding-left: 5px; gap: 4px; white-space: nowrap; }
    .tb.text.auto { width: 98px; }
    .tb.on { background: repeating-conic-gradient(#fff 0 25%, #f0f0f0 0 50%) 0 0 / 2px 2px; border: 1px solid #a0a0a0; border-right-color: #fff; border-bottom-color: #fff; width: 26px; margin: 0 1px; }
    .tb.tf { color: #a9a9a9; font: 10px "DejaVu Sans Condensed", "DejaVu Sans", sans-serif; }
    .ico { width: 17px; height: 17px; display: block; flex: none; }
    .sep { width: 1px; height: 21px; background: #a0a0a0; margin: 0 3px 0 2px; }
    .right { margin-left: auto; display: flex; align-items: center; gap: 13px; padding-right: 6px; }
    .right button { display: grid; }
    chart-view { flex: 1; min-height: 640px; margin: 0 2px 0 1px; }
    .strip { background: #fff; padding-top: 2px; }
    .tabs { display: flex; height: 21px; border-top: 1px solid #000; border-bottom: 1px solid #fff; background: #f0f0f0; }
    .tabs button { height: 19px; line-height: 18px; color: #808080; padding: 0 10px 0 14px; border-left: 1px solid #808080; margin-left: 1px; }
    .tabs button.cur { margin: -1px 0 0; padding: 0 9px 0 10px; background: #fff; color: #000; border: 1px solid #000; border-top-color: #fff; box-shadow: 1px 1px 0 #909090; }
    .tabs .nav { margin-left: auto; display: flex; gap: 14px; padding: 7px 10px 0 0; }
    .tabs .nav i { border: 4px solid transparent; height: 0; }
    .tabs .nav .l { border-right-color: #808080; border-left: 0; }
    .tabs .nav .r { border-left-color: #808080; border-right: 0; }
    .status { display: flex; align-items: center; height: 22px; padding-left: 2px; background: #f0f0f0; font-size: 11px; }
    .status > span { flex: none; border-left: 1px solid #a0a0a0; height: 18px; line-height: 18px; padding-left: 5px; white-space: nowrap; }
    .status > .msg { flex: 1; border: 0; padding: 0; }
    .w116 { width: 116px; }
    .w102 { width: 102px; }
    .w70 { width: 70px; }
    .w130 { width: 130px; display: flex; align-items: center; gap: 4px; }
    .task { display: grid; grid-template-columns: 1fr auto 1fr; align-items: center; height: 48px; padding-top: 1px; box-shadow: inset 0 1px #d0dadf; background: linear-gradient(90deg, #d9e8e8, #dde7ec 12%, #d6eaf2 35%, #d9ebf2 75%, #d8e9f3 92%, #dfe6f0); color: #1b1b1b; }
    .weather { display: flex; align-items: center; gap: 9px; padding-left: 22px; justify-self: start; text-align: left; }
    .weather svg { width: 20px; height: 20px; }
    .weather small { display: block; font-size: inherit; color: #5a6266; }
    .apps { display: flex; gap: 6px; }
    .apps button { width: 38px; height: 38px; display: grid; place-items: center; border-radius: 4px; position: relative; }
    .apps .run { background: #edf5fb; box-shadow: 0 0 0 1px #dde8ee; }
    .apps .run::after { content: ""; position: absolute; left: 11px; right: 11px; bottom: 0; height: 3px; border-radius: 2px; background: #1f8296; }
    .apps svg { width: 24px; height: 24px; }
    .tray { display: flex; align-items: center; justify-content: flex-end; gap: 9px; padding-right: 20px; }
    .tray svg { width: 16px; height: 16px; fill: none; stroke: #1b1b1b; }
    .clock { text-align: right; margin-left: 8px; }
    .badge { width: 16px; height: 16px; border-radius: 8px; background: #1f8296; color: #fff; text-align: center; font-size: 11px; line-height: 16px; margin-left: -2px; }
  `;

  private tb(name: string, label: string, cls = "") {
    return html`<button class="tb ${cls}" title=${label} aria-label=${label}>${icon(name)}</button>`;
  }

  render() {
    return html`
      <header class="title">
        <svg class="logo" viewBox="0 0 16 16"><circle cx="8" cy="8" r="7.500" fill="#2fb457"/><ellipse cx="7.500" cy="8" rx="3.200" ry="5" fill="#fff"/><path d="M7 7h8M7 9.500h8M9 5.500v5.500" stroke="#2fb457" stroke-width="1.500"/></svg>
        <h1>2101376030: FTMO-Demo - Demo Account - FTMO S.R.O. - [AUDCHF,M3 (offline)]</h1>
        <button class="win" aria-label="Minimize"><svg viewBox="0 0 11 11"><path d="M.5 5.500h10"/></svg></button>
        <button class="win" aria-label="Restore"><svg viewBox="0 0 11 11"><rect x=".5" y="2.500" width="8" height="8" rx="1.500"/><path d="M2.500 2V1.500q0-1 1-1h5q2 0 2 2v5q0 1-1 1H9"/></svg></button>
        <button class="win" aria-label="Close"><svg viewBox="0 0 11 11"><path d="M.5.5l10 10M10.500.5l-10 10"/></svg></button>
      </header>
      <nav class="menu">
        <svg class="doc" viewBox="0 0 16 16"><rect x="1.500" y="1.500" width="10" height="8" fill="#fff" stroke="#5b93d6"/><path d="M2 3h9" stroke="#5b93d6" stroke-width="2"/><rect x="4.500" y="5.500" width="10" height="9" fill="#fff" stroke="#5b93d6"/><path d="M5 6.500h9" stroke="#8db8ea" stroke-width="2"/><path d="M6 12l2-3 2 3 2-3 1 2" fill="none" stroke="#5b93d6"/></svg>
        ${["File", "View", "Insert", "Charts", "Tools", "Window", "Help"].map((m) => html`<button>${m}</button>`)}
        <span class="fill"></span>
        <button class="mdi" aria-label="Minimize chart"><svg viewBox="0 0 8 8"><path d="M1 6.500h6" stroke-width="2"/></svg></button>
        <button class="mdi" aria-label="Restore chart"><svg viewBox="0 0 8 8"><path d="M2.500 3V1h5v4H6M2.500 1.500h5"/><path d="M.5 3.500h5v4h-5zM.5 4h5"/></svg></button>
        <button class="mdi" aria-label="Close chart"><svg viewBox="0 0 8 8"><path d="M1 1l6 6M7 1L1 7" stroke-width="2"/></svg></button>
      </nav>
      <div class="tool">
        <div class="bar">
          ${this.tb("newChart", "New chart", "drop")} ${this.tb("profiles", "Profiles", "drop")}
          <span class="sep"></span>
          ${this.tb("market", "Market Watch")} ${this.tb("dataWindow", "Data Window")} ${this.tb("navigator", "Navigator")}
          ${this.tb("terminal", "Terminal")} ${this.tb("tester", "Strategy Tester")}
          <span class="sep"></span>
          <button class="tb text">${icon("newOrder")}New Order</button>
          ${this.tb("metaEditor", "MetaEditor")} ${this.tb("market2", "Market")} ${this.tb("signals", "Signals")}
          <button class="tb text auto">${icon("autoTrading")}AutoTrading</button>
        </div>
        <div class="bar">
          ${this.tb("barChart", "Bar Chart")} ${this.tb("candleChart", "Candlesticks", "on")} ${this.tb("lineChart", "Line Chart")}
          <span class="sep"></span>
          ${this.tb("zoomIn", "Zoom In")} ${this.tb("zoomOut", "Zoom Out")} ${this.tb("tile", "Tile Windows")}
          <span class="sep"></span>
          ${this.tb("autoScroll", "Auto Scroll")} ${this.tb("chartShift", "Chart Shift", "on")}
          <span class="sep"></span>
          ${this.tb("indicators", "Indicators", "drop")} ${this.tb("clock", "Periods", "drop")} ${this.tb("template", "Templates", "drop")}
        </div>
        <div class="right">
          <button aria-label="Search"><svg width="14" height="14" viewBox="0 0 14 14"><path d="M6 8l-5 5" stroke="#2f6be0" stroke-width="2.500"/><circle cx="8.500" cy="5.500" r="4" fill="#eef5ff" stroke="#2f6be0" stroke-width="1.500"/></svg></button>
          <button aria-label="Chat"><svg width="22" height="16" viewBox="0 0 22 16"><path d="M14 1c4 0 7 2 7 5 0 2-1 3-3 4l1 3-3-2.500c-5 .5-8-1.500-8-4.500s2-5 6-5z" fill="#f6f6f6" stroke="#7a7a7a"/><path d="M6 5.500c3 0 5 1.500 5 4s-2 4-5 4l-3 2 .5-2.500C2 12.500 1 11 1 9.500c0-2.500 2-4 5-4z" fill="#fff" stroke="#7a7a7a"/></svg></button>
        </div>
      </div>
      <div class="tool">
        <div class="bar low">
          ${this.tb("cursor", "Cursor", "on")} ${this.tb("cross", "Crosshair")}
          <span class="sep"></span>
          ${this.tb("vline", "Vertical Line")} ${this.tb("hline", "Horizontal Line")} ${this.tb("trend", "Trendline")}
          ${this.tb("channel", "Equidistant Channel")} ${this.tb("fibo", "Fibonacci")} ${this.tb("letter", "Text")}
          ${this.tb("label", "Text Label")} ${this.tb("arrows", "Arrows", "drop")}
        </div>
        <div class="bar low">
          ${["M1", "M5", "M15", "M30", "H1", "H4", "D1", "W1", "MN"].map(
            (t) => html`<button class="tb tf" @click=${() => (this.frame = t)}>${t}</button>`,
          )}
        </div>
      </div>
      <chart-view></chart-view>
      <div class="strip">
        <div class="tabs">
          <button>AUDCHF,H1</button>
          <button class="cur">AUDCHF,M3 (offline)</button>
          <span class="nav"><i class="l"></i><i class="r"></i></span>
        </div>
      </div>
      <footer class="status">
        <span class="msg">For Help, press F1</span>
        <span class="w116">Default</span>
        <span class="w102">2022.08.04 13:00</span>
        <span class="w70">O: 0.66959</span>
        <span class="w70">H: 0.67009</span>
        <span class="w70">L: 0.66959</span>
        <span class="w70">C: 0.67009</span>
        <span class="w70">V: 3809</span>
        <span class="w130">
          <svg width="24" height="13" viewBox="0 0 24 13">
            ${[0, 1, 2, 3, 4, 5, 6, 7].map((i) => svg`<path d=${`M${i * 3 + 1} 0v${9 - i}`} stroke="#6b8e00" stroke-width="2"/><path d=${`M${i * 3 + 1} 13v${-(3 + i)}`} stroke="#12405f" stroke-width="2"/>`)}
          </svg>
          13/0 kb
        </span>
      </footer>
      <div class="task">
        <button class="weather">
          <svg viewBox="0 0 20 20"><path d="M12 0c8 3 10 11 5 16-5 5-13 4-16-2 6 2 14-3 11-14z" fill="#fbb81c"/><path d="M13 2c6 4 6 11 2 14-4 3-8 3-12 0 8 1 13-5 10-14z" fill="#f79a13" opacity=".4"/></svg>
          <span>76°F<small>Clear</small></span>
        </button>
        <div class="apps">
          <button aria-label="Start"><svg viewBox="0 0 24 24"><defs><linearGradient id="w" x1="0" y1="0" x2="1" y2="1"><stop offset="0" stop-color="#4ccdfb"/><stop offset="1" stop-color="#0067c8"/></linearGradient></defs><path d="M0 0h11.500v11.500H0zM12.500 0H24v11.500H12.500zM0 12.500h11.500V24H0zM12.500 12.500H24V24H12.500z" fill="url(#w)"/></svg></button>
          <button aria-label="Search"><svg viewBox="0 0 24 24"><circle cx="13.500" cy="9.500" r="8.500" fill="#e6f0f4" stroke="#2c2c2c" stroke-width="2"/><path d="M7.500 16L2 22.500" stroke="#2c2c2c" stroke-width="2.800" stroke-linecap="round"/></svg></button>
          <button aria-label="Task view"><svg viewBox="0 0 24 24"><rect x="1" y="7" width="17" height="16" rx="1" fill="#2a2a2a"/><rect x="7" y="1" width="17" height="16" rx="1" fill="#f6f6f6"/><path d="M7 7h11v10H7z" fill="#b8b8b8"/></svg></button>
          <button aria-label="Chat"><svg viewBox="0 0 24 24"><path d="M12 0c7 0 12 5 12 12s-5 12-12 12c-2 0-3-.5-4.500-1L1 24l1-5C.5 17 0 14.500 0 12 0 5 5 0 12 0z" fill="#6a62c8"/><path d="M12 0c7 0 12 5 12 12 0 2-.5 4-1.500 6L2 6.500C4 2.500 7.500 0 12 0z" fill="#8a7ad6" opacity=".6"/><rect x="5" y="7.500" width="10" height="9.500" rx="1.500" fill="#fff"/><path d="M16 11l3-2.500v7.500l-3-2.500z" fill="#fff"/></svg></button>
          <button aria-label="File Explorer"><svg viewBox="0 0 24 24"><path d="M0 2q0-1.500 1.500-1.500h7L11 4H0z" fill="#e0a010"/><path d="M0 4h24v17q0 2-2 2H2q-2 0-2-2z" fill="#fcca48"/><path d="M4 23v-5q0-2.500 2.500-2.500h11Q20 15.500 20 18v5z" fill="#0f78cc"/><path d="M7.500 18.500h9" stroke="#0b5da6" stroke-width="2"/></svg></button>
          <button aria-label="Opera"><svg viewBox="0 0 24 24"><path fill-rule="evenodd" d="M12 0c6.500 0 11.500 5 11.500 12S18.500 24 12 24 .5 19 .5 12 5.500 0 12 0zm0 3.500C9 3.500 7 7 7 12s2 8.500 5 8.500 5-3.500 5-8.500-2-8.500-5-8.500z" fill="#d4142a"/><path d="M14 .2c5.500 1 9.500 5.500 9.500 11.800S19.500 22.800 14 23.800c-2 0-3.500-.8-5-2.300 1 .4 2 .3 3 .3 3.500-1 5-5 5-9.800s-1.500-8.800-5-9.800c-1 0-2-.1-3 .3C10.500 1 12 .2 14 .2z" fill="#f8484a"/></svg></button>
          <button class="run" aria-label="MetaTrader"><svg viewBox="0 0 24 24"><path fill-rule="evenodd" d="M11 1c6 0 10 4.500 10 11s-4 11-10 11S1 18.500 1 12 5 1 11 1zm0 4C8 5 6.500 8 6.500 12S8 19 11 19s4.500-3 4.500-7S14 5 11 5z" fill="#2fb062"/><path d="M11 10.500h13M11 14h13" stroke="#2fb062" stroke-width="2.200"/><path d="M14.500 7v10M20 7.500v9" stroke="#2fb062" stroke-width="2.200"/></svg></button>
        </div>
        <div class="tray">
          <svg viewBox="0 0 16 16"><path d="M2.500 10.500L8 5l5.500 5.500" stroke-width="1.500"/></svg>
          <svg viewBox="0 0 16 16"><path d="M11 3A5.500 5.500 0 104 12" stroke="#f2b33a" stroke-width="2.500"/><circle cx="11" cy="11" r="4.800" fill="#35a03a" stroke="none"/><path d="M8.500 11l2 2 3-3.500" stroke="#fff" stroke-width="1.400"/></svg>
          <svg viewBox="0 0 16 16"><path d="M.5 6q7.500-7 15 0M3 8.800q5-4.800 10 0M5.500 11.300q2.500-2.500 5 0" stroke-width="1.400"/><circle cx="8" cy="13.500" r="1.400" fill="#1b1b1b" stroke="none"/></svg>
          <svg viewBox="0 0 16 16"><path d="M.5 6H3l3.500-3.500v11L3 10H.5z"/><path d="M9 6q1.500 2 0 4M11 4q3 4 0 8M13 2q5 6 0 12"/></svg>
          <svg viewBox="0 0 16 16"><rect x=".7" y="3.700" width="13" height="8.600" rx="1.500" stroke-width="1.300"/><path d="M15 6.500v3" stroke-width="1.600"/><path d="M3 6h1.500v4H3z" fill="#1b1b1b" stroke="none"/></svg>
          <div class="clock">6:34 PM<br />8/5/2022</div>
          <span class="badge">2</span>
        </div>
      </div>
    `;
  }
}
